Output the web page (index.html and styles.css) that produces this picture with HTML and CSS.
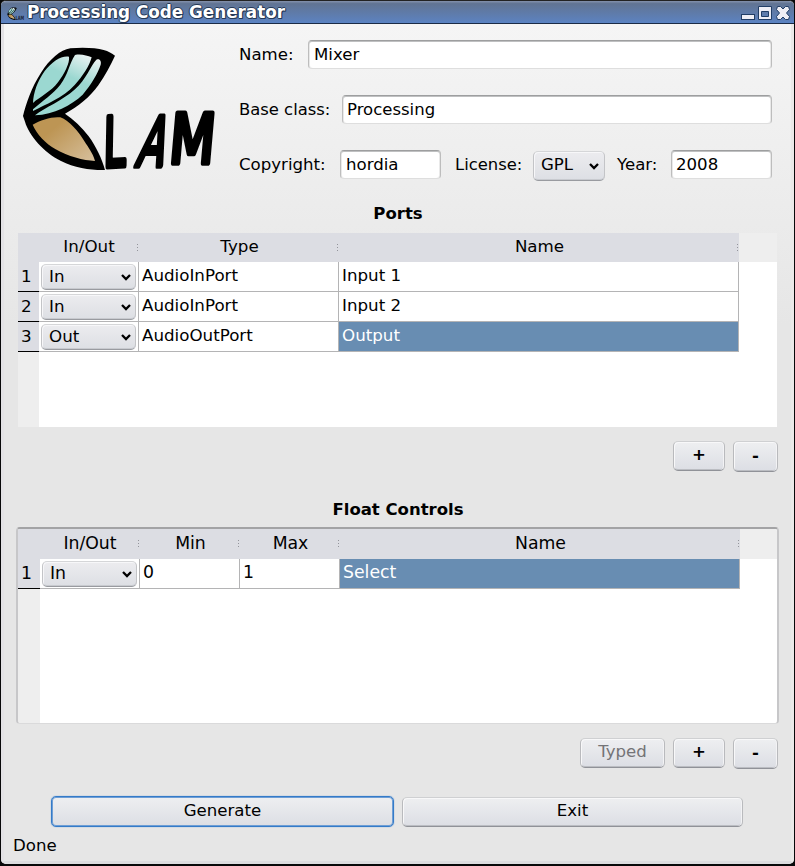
FILE: index.html
```html
<!DOCTYPE html>
<html lang="en">
<head>
<meta charset="utf-8">
<title>Processing Code Generator</title>
<link rel="stylesheet" href="styles.css">
</head>
<body>
<svg class="defs" aria-hidden="true">
  <defs>
    <linearGradient id="wing" gradientUnits="userSpaceOnUse" x1="215" y1="50" x2="180" y2="125"><stop offset="0" stop-color="#edf3f3"/><stop offset="1" stop-color="#9bd8d1"/></linearGradient>
    <linearGradient id="sand" x1=".3" y1=".3" x2="1" y2=".9"><stop offset="0" stop-color="#bd9554"/><stop offset="1" stop-color="#d5bd98"/></linearGradient>
    <symbol id="butterfly" viewBox="0 0 645 435">
      <path d="M39 243C48 206 64 158 93 113C119 73 151 44 181 40C222 36 258 39 281 45C295 49 306 55 315 62C302 90 285 122 265 151C240 186 206 214 165 236C191 254 215 276 236 304C258 334 276 372 285 405C244 406 194 399 153 378C102 352 57 302 45 260Z"/>
      <path fill="url(#wing)" d="M69 204C70 174 82 139 104 108C126 80 154 61 177 65C180 84 163 116 144 142C122 171 90 185 69 204Z"/>
      <path fill="url(#wing)" d="M69 223C98 196 128 179 151 149C175 118 178 85 195 60C213 56 232 62 245 67C239 91 219 123 194 150C157 190 109 207 69 228Z"/>
      <path fill="url(#wing)" d="M75 241C106 217 156 198 195 163C228 134 242 92 259 74C269 69 275 78 272 89C264 114 244 148 218 179C184 211 132 238 75 241Z"/>
      <path fill="url(#sand)" d="M68 269C92 255 126 244 151 247C178 257 205 288 228 326C241 345 252 363 255 378C220 377 174 364 137 343C107 325 80 298 68 269Z"/>
    </symbol>
  </defs>
</svg>
<div class="window">
  <header class="titlebar">
    <svg class="app-icon" viewBox="0 0 20 19"><use href="#butterfly" width="22" height="15" x="0" y="3"/><text class="mini" transform="translate(9.500 16.500) scale(.6 1)">LAM</text></svg>
    <h1>Processing Code Generator</h1>
    <svg class="controls" viewBox="0 0 50 18">
      <g fill="#eeeef5" stroke="#213d65">
        <rect x="1.5" y="10.500" width="13" height="5"/>
        <path fill-rule="evenodd" d="M18.500 2.500h13v13h-13zM21.500 7.500v5h7v-5z"/>
        <path stroke-linejoin="round" d="M37.500 2.500h3l2.500 2.500 2.500-2.500h3l1 3-3 3.500 3 3.500-1 3h-3l-2.500-2.500-2.500 2.500h-3l-1-3 3-3.500-3-3.500z"/>
      </g>
    </svg>
  </header>
  <main class="body">
    <section class="top">
      <svg class="logo" viewBox="0 0 645 435">
        <use href="#butterfly" width="645" height="435"/>
        <g class="wordmark">
          <text transform="translate(280 395) rotate(-3) skewX(-4) scale(.58 1)">L</text>
          <text transform="translate(374 393) skewX(-15) scale(.58 1)">A</text>
          <text transform="translate(474 385) skewX(-5) scale(.77 1)">M</text>
        </g>
      </svg>
      <form class="form">
        <div class="row"><label>Name:</label><div class="field name">Mixer</div></div>
        <div class="row"><label>Base class:</label><div class="field base">Processing</div></div>
        <div class="row"><label>Copyright:</label><div class="field short">hordia</div><label class="license">License:</label><div class="combo gpl">GPL<svg viewBox="0 0 10 8"><path d="M1 2l4 4 4-4"/></svg></div><label class="year">Year:</label><div class="field short">2008</div></div>
      </form>
    </section>
    <h2 class="ports-title">Ports</h2>
    <div class="table ports">
      <div class="tr head"><span class="num"></span><span class="c1">In/Out</span><span>Type</span><span>Name</span><span class="rest"></span></div>
      <div class="tr"><span class="num">1</span><div class="pick"><div class="combo">In<svg viewBox="0 0 10 8"><path d="M1 2l4 4 4-4"/></svg></div></div><span>AudioInPort</span><span>Input 1</span></div>
      <div class="tr"><span class="num">2</span><div class="pick"><div class="combo">In<svg viewBox="0 0 10 8"><path d="M1 2l4 4 4-4"/></svg></div></div><span>AudioInPort</span><span>Input 2</span></div>
      <div class="tr"><span class="num">3</span><div class="pick"><div class="combo">Out<svg viewBox="0 0 10 8"><path d="M1 2l4 4 4-4"/></svg></div></div><span>AudioOutPort</span><span class="selected">Output</span></div>
    </div>
    <div class="actions"><button class="plus">+</button><button class="minus">-</button></div>
    <h2 class="floats-title">Float Controls</h2>
    <div class="frame">
      <div class="table floats">
        <div class="tr head"><span class="num"></span><span class="c1">In/Out</span><span>Min</span><span>Max</span><span>Name</span><span class="rest"></span></div>
        <div class="tr"><span class="num">1</span><div class="pick"><div class="combo">In<svg viewBox="0 0 10 8"><path d="M1 2l4 4 4-4"/></svg></div></div><span>0</span><span>1</span><span class="selected">Select</span></div>
      </div>
    </div>
    <div class="actions second"><button class="typed" disabled>Typed</button><button class="plus">+</button><button class="minus">-</button></div>
    <div class="final"><button class="generate">Generate</button><button class="exit">Exit</button></div>
    <footer>Done</footer>
  </main>
</div>
</body>
</html>
```
FILE: styles.css
```css
* { box-sizing: border-box; }
body { margin: 0; background: #080809; font: 16.600px/20px "DejaVu Sans", sans-serif; color: #000; }
.defs { display: block; width: 0; height: 0; }
.window { width: 793px; height: 864px; margin: 0 1px; border-top: 1px solid #222; border-radius: 5px; overflow: hidden; background: #e6e6e6; }
.titlebar { height: 23px; display: flex; align-items: center; padding: 0 4px 0 5px; background: linear-gradient(#8492ad, #617493 12%, #5d80b9 85%, #5a83c4); border-bottom: 1px solid #1b2b46; border-radius: 4px 4px 0 0; }
.app-icon { flex: none; width: 20px; height: 19px; margin-right: -1px; overflow: visible; }
.mini { font: bold 6px/6px "DejaVu Sans", sans-serif; fill: #1b2433; }
h1 { flex: 1; margin: 0 0 0 2px; font-size: 16.800px; line-height: 20px; color: #fff; text-shadow: 1px 0 #263956, -1px 0 #263956, 0 1px #263956, 0 -1px #263956, 1px 1px #263956; }
.controls { width: 50px; height: 18px; margin-top: 1px; }
.body { height: 840px; border: solid #dcdcdf; border-width: 0 3px 3px; border-left-color: #e3e2e5; border-right-color: #ebe9e8; background: linear-gradient(#f5f5f5, #e6e6e6 300px); }
.top { display: flex; height: 176px; }
.logo { width: 215px; height: 145px; margin: 11px 0 0 6px; overflow: visible; }
.wordmark { font: 204px "DejaVu Sans", sans-serif; stroke: #000; stroke-width: 17px; stroke-linejoin: round; }
.form { width: 533px; margin: 16px 0 0 14px; }
.row { height: 29px; display: flex; margin-bottom: 26px; line-height: 29px; }
.row label { width: 101px; white-space: nowrap; }
.row:nth-child(1) label { width: 69px; }
.row:nth-child(2) label { width: 103px; font-size: 16.400px; }
.field { height: 29px; padding-left: 5px; line-height: 28px; background: #fff; border: 1px solid #bdbdbd; border-color: #9d9e9f #bdbdbd #dedede; border-radius: 4px; box-shadow: inset 0 1px #bfc0c1, inset 1px 0 #e9e9e9, inset -1px 0 #e9e9e9; }
.field.name { width: 464px; }
.field.base { width: 430px; padding-left: 4px; font-size: 16.500px; }
.field.short { width: 101px; }
.row .license { width: 79px; margin-left: 14px; margin-right: -1px; font-size: 16.400px; }
.row .year { width: 54px; margin-left: 12px; }
.field.short:last-child { padding-left: 4px; }
.combo { display: flex; align-items: center; justify-content: space-between; height: 26px; padding: 0 4px 3px 7px; border: 1px solid #c3c4c7; border-top-color: #d5d6d8; border-bottom-color: #999ba0; border-radius: 5px; background: linear-gradient(#ececef, #dddfe4); box-shadow: inset 1px 1px #f7f7f9, inset 0 -1px #c8cacf; }
.combo svg { width: 10px; height: 8px; margin-top: 3px; fill: none; stroke: #000; stroke-width: 2.300; }
.gpl { width: 72px; height: 30px; margin-top: 1px; padding: 0 5px 3px 7px; }
h2 { margin: 0; font-size: 16.500px; line-height: 20px; text-align: center; }
.ports-title { margin-top: 4px; width: 788px; }
.table { background: linear-gradient(90deg, #eee 21px, #fff 21px); font-size: 16.700px; }
.ports { width: 759px; height: 194px; margin: 9px 0 0 14px; }
.tr { display: grid; grid-template-columns: 21px 100px 200px 400px 1fr; height: 30px; }
.tr > span { height: 30px; padding: 0 0 0 3px; line-height: 27px; border-right: 1px solid #b4b4b5; border-bottom: 1px solid #b4b4b5; }
.tr > .num { padding-left: 3px; line-height: 29px; background: #dcdde3; border-right: 0; border-bottom-color: #000; }
.pick { height: 30px; padding: 2px 2px 1px; border-right: 1px solid #b4b4b5; border-bottom: 1px solid #b4b4b5; }
.tr .selected { color: #fff; background: #688db2; }
.tr.head, .tr.head > span { height: 29px; }
.tr.head > span { padding: 0 0 0 1px; background-color: #dcdde3; text-align: center; border: 0; line-height: 27px; background-image: linear-gradient(#93949b, #93949b), linear-gradient(#93949b, #93949b), linear-gradient(#93949b, #93949b); background-repeat: no-repeat; background-size: 1px 1px; background-position: calc(100% - 1px) 11px, calc(100% - 1px) 14px, calc(100% - 1px) 17px; }
.tr.head > .c1 { padding: 0; }
.tr.head > .num, .tr.head > .rest { background-image: none; }
.tr.head > .rest { background-color: #eee; }
.actions { display: flex; height: 30px; gap: 8px; justify-content: flex-end; width: 774px; margin-top: 14px; }
button { display: block; height: 30px; margin: 0; padding: 0 0 2px; font: inherit; color: #000; border: 1px solid #b9babd; border-top-color: #cfd0d2; border-bottom-color: #909298; border-radius: 5px; background: linear-gradient(#eeeff1, #dcdee4); box-shadow: inset 1px 1px #f8f8f9, inset -1px 0 #f3f3f5, inset 0 -1px #bbbdc2; }
.plus, .minus { font-weight: bold; }
.plus { width: 52px; }
.minus { width: 45px; height: 31px; }
.typed { width: 85px; color: #747477; }
.floats-title { margin-top: 29px; width: 788px; }
.frame { width: 763px; height: 197px; margin: 7px 0 0 12px; border: 2px solid #c3c3c5; border-color: #a3a3a5 #c7c7c9 #dadadb; border-width: 2px 2px 1px; border-radius: 4px; overflow: hidden; }
.floats { height: 194px; background: linear-gradient(90deg, #eee 22px, #fff 22px); }
.floats .tr { grid-template-columns: 22px 100px 100px 100px 400px 1fr; font-size: 17.300px; }
.floats .tr:last-child > span:not(.num) { line-height: 26px; }
.floats .head, .floats .head > span { height: 30px; }
.floats .head > span { line-height: 29px; }
.actions.second { margin-top: 14px; }
.final { display: flex; gap: 8px; margin: 28px 0 0 47px; }
.generate { width: 343px; height: 31px; border: 1px solid #347bc9; box-shadow: inset 0 0 0 1px #6e9ed5, 0 0 1px #347bc9; }
.exit { width: 341px; height: 30px; margin-top: 1px; }
footer { margin: 9px 0 0 9px; }
```
